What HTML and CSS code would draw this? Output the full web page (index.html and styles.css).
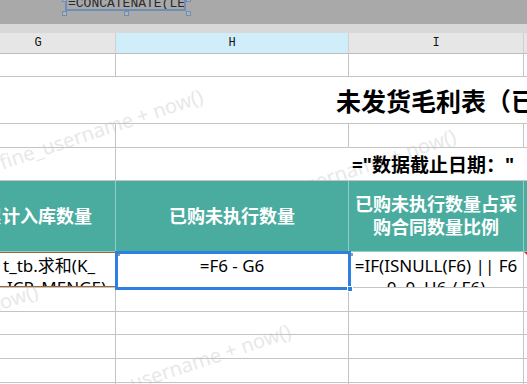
FILE: index.html
```html
<!DOCTYPE html>
<html lang="zh-CN">
<head>
  <meta charset="UTF-8" />
  <title>未发货毛利表</title>
  <link rel="stylesheet" href="styles.css">
</head>
<body>

  <!-- grey designer bar with the floating formula shape -->
  <div class="toolbar">
    <div class="shape">
      <div class="shape-box">=CONCATENATE(LEFT(</div>
      <span class="handle tl"></span>
      <span class="handle tr"></span>
      <span class="handle bl"></span>
      <span class="handle bm"></span>
      <span class="handle br"></span>
    </div>
  </div>
  <div class="strip"></div>

  <div class="sheet">
    <!-- column letters -->
    <div class="cell colhead">G</div>
    <div class="cell colhead active">H</div>
    <div class="cell colhead">I</div>
    <div class="cell colhead"></div>

    <!-- row 1 -->
    <div class="cell"></div><div class="cell"></div><div class="cell"></div><div class="cell"></div>

    <!-- row 2: title -->
    <div class="cell title">未发货毛利表（已</div>

    <!-- row 3 -->
    <div class="cell"></div><div class="cell"></div><div class="cell"></div><div class="cell"></div>

    <!-- row 4: date -->
    <div class="cell"></div>
    <div class="cell date">="数据截止日期："</div>

    <!-- row 5: header -->
    <div class="cell head">累计入库数量</div>
    <div class="cell head">已购未执行数量</div>
    <div class="cell head">已购未执行数量占采<br>购合同数量比例</div>
    <div class="cell head"></div>

    <!-- row 6: formulas -->
    <div class="cell data data-g">
      <span class="line">t_tb.求和(K_</span>
      <span class="line second">ICP_MENGE)</span>
    </div>
    <div class="cell data data-h"><span class="mark"></span>=F6 - G6<span class="fill-handle"></span></div>
    <div class="cell data data-i"><span class="mark"></span>=IF(ISNULL(F6) || F6<br>0, 0, H6 / F6)</div>
    <div class="cell data data-j"></div>

    <!-- empty rows -->
    <div class="cell"></div><div class="cell"></div><div class="cell"></div><div class="cell"></div>
    <div class="cell"></div><div class="cell"></div><div class="cell"></div><div class="cell"></div>
    <div class="cell"></div><div class="cell"></div><div class="cell"></div><div class="cell"></div>
    <div class="cell"></div><div class="cell"></div><div class="cell"></div><div class="cell"></div>
    <div class="cell"></div><div class="cell"></div><div class="cell"></div><div class="cell"></div>
  </div>

  <!-- watermark -->
  <div class="watermarks">
    <span class="wm" style="left:0px; top:149px;">fine_username + now()</span>
    <span class="wm" style="left:253px; top:189px;">fine_username + now()</span>
    <span class="wm" style="left:506px; top:229px;">fine_username + now()</span>
    <span class="wm" style="left:-165px; top:344px;">fine_username + now()</span>
    <span class="wm" style="left:88px; top:384px;">fine_username + now()</span>
  </div>

</body>
</html>
```

FILE: styles.css
```css
* { margin: 0; padding: 0; box-sizing: border-box; }

body {
  width: 527px;
  height: 384px;
  overflow: hidden;
  position: relative;
  background: #fff;
  color: #000;
  font-family: "Noto Sans", "Noto Sans CJK SC", sans-serif;
}

/* top bar */
.toolbar {
  height: 24px;
  background: #a9a9aa;
  position: relative;
}

.strip {
  height: 9px;
  background: #d8d8d9;
}

.shape {
  position: absolute;
  left: 64px;
  top: 0;
  width: 125px;
  height: 14px;
}

.shape-box {
  position: absolute;
  left: 1px;
  top: -10px;
  width: 121px;
  height: 21px;
  border: 2px solid #6e8db7;
  overflow: hidden;
  white-space: nowrap;
  font-family: "Liberation Mono", monospace;
  font-size: 13px;
  line-height: 13px;
  color: #2a2a2a;
  padding: 5px 0 0 1px;
}

.handle {
  position: absolute;
  width: 5px;
  height: 5px;
  border: 1px solid #6e8db7;
  background: #b3b3b4;
}
.handle.tl { left: -2px; top: -3px; }
.handle.tr { right: -2px; top: -3px; }
.handle.bl { left: -2px; bottom: -2px; }
.handle.bm { left: 60px; bottom: -2px; }
.handle.br { right: -2px; bottom: -2px; }

/* sheet */
.sheet {
  display: grid;
  grid-template-columns: 155px 233px 175px 100px;
  grid-template-rows: 21px 23px 47px 24px 33px 71px 36px 24px 23px 24px 24px 24px;
  margin-left: -39px;
  position: relative;
  z-index: 1;
}

.cell {
  border-right: 1px solid #c4c4c4;
  border-bottom: 1px solid #c4c4c4;
  min-width: 0;
}

.colhead {
  background: #e6e6e6;
  border-right-color: #d0d0d0;
  border-bottom-color: #bdbdbd;
  display: flex;
  align-items: center;
  justify-content: center;
  font-family: "Liberation Mono", monospace;
  font-size: 12px;
  color: #111;
}
.colhead.active { background: #cfeef9; }

.title {
  grid-column: span 4;
  display: flex;
  align-items: center;
  padding-left: 375px;
  white-space: nowrap;
  overflow: hidden;
  font-size: 25px;
  font-weight: bold;
}

.date {
  grid-column: span 3;
  display: flex;
  align-items: center;
  padding-left: 236px;
  white-space: nowrap;
  overflow: hidden;
  font-size: 19px;
  font-weight: bold;
}

.head {
  background: #4aac9f;
  border-right-color: #93cdc5;
  border-bottom-color: #93cdc5;
  color: #fff;
  font-size: 18px;
  font-weight: bold;
  line-height: 23px;
  text-align: center;
  display: flex;
  align-items: center;
  justify-content: center;
  white-space: nowrap;
}

.data {
  position: relative;
  font-size: 17px;
  line-height: 22px;
  padding-top: 3px;
  white-space: nowrap;
}

.data-g {
  overflow: hidden;
  padding-left: 42px;
}
.data-g .line { display: block; }
.data-g .second { padding-left: 4px; }
.data-g::after {
  content: "";
  position: absolute;
  top: -1px; left: 0; right: -2px; bottom: -1px;
  border: 2px solid #9c6931;
  border-left: none;
}

.data-h {
  text-align: center;
  z-index: 2;
}
.data-h::after {
  content: "";
  position: absolute;
  top: -1px; left: -1px; right: -3px; bottom: -3px;
  border: 3px solid #2f7fe3;
}

.fill-handle {
  position: absolute;
  right: -5px;
  bottom: -5px;
  width: 6px;
  height: 6px;
  background: #2f7fe3;
  border: 1px solid #fff;
  z-index: 3;
}

.data-i {
  text-align: center;
  overflow: hidden;
}

.mark {
  position: absolute;
  left: 1px;
  top: 1px;
  width: 3px;
  height: 3px;
  background: #9a9a9a;
}

.data-j::before {
  content: "";
  position: absolute;
  left: 0;
  top: 0;
  border-top: 5px solid #e0202a;
  border-left: 5px solid transparent;
}
.data-j { position: relative; }

/* watermark */
.watermarks {
  position: absolute;
  inset: 0;
  z-index: 0;
  pointer-events: none;
  overflow: hidden;
}

.wm {
  position: absolute;
  white-space: nowrap;
  font-family: "Noto Sans", sans-serif;
  font-size: 20px;
  line-height: 28px;
  color: #e8e8e8;
  transform: rotate(-18.4deg);
  transform-origin: 0 50%;
}
```
